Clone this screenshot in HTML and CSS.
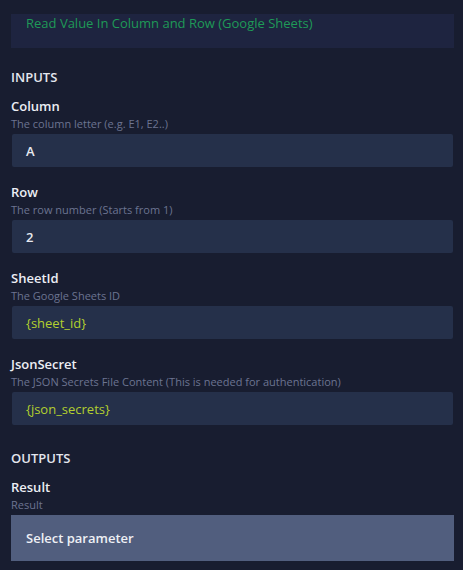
FILE: index.html
```html
<!DOCTYPE html>
<html lang="en">
<head>
<meta charset="utf-8">
<title>Read Value In Column and Row</title>
<link rel="stylesheet" href="styles.css">
</head>
<body>
<div class="panel">
  <div class="title-box">Read Value In Column and Row (Google Sheets)</div>

  <div class="section-title section-inputs">INPUTS</div>

  <div class="field">
    <div class="label">Column</div>
    <div class="desc">The column letter (e.g. E1, E2..)</div>
    <div class="input">A</div>
  </div>

  <div class="field">
    <div class="label">Row</div>
    <div class="desc">The row number (Starts from 1)</div>
    <div class="input">2</div>
  </div>

  <div class="field">
    <div class="label">SheetId</div>
    <div class="desc">The Google Sheets ID</div>
    <div class="input var">{sheet_id}</div>
  </div>

  <div class="field">
    <div class="label">JsonSecret</div>
    <div class="desc">The JSON Secrets File Content (This is needed for authentication)</div>
    <div class="input var">{json_secrets}</div>
  </div>

  <div class="section-title section-outputs">OUTPUTS</div>

  <div class="field">
    <div class="label">Result</div>
    <div class="desc">Result</div>
    <div class="select">Select parameter</div>
  </div>
</div>
</body>
</html>
```

FILE: styles.css
```css
html, body {
  margin: 0;
  padding: 0;
  background: #181d30;
}

body {
  font-family: "Open Sans", "Noto Sans", sans-serif;
  color: #e6e8ef;
}

.panel {
  padding: 14px 9px 0 11px;
  display: flex;
  flex-direction: column;
}

.title-box {
  height: 34px;
  box-sizing: border-box;
  padding: 0 15px;
  background: #1e2440;
  color: #1e9a57;
  font-size: 13px;
  line-height: 18px;
}

.section-title {
  font-size: 13px;
  line-height: 18px;
  font-weight: 600;
  color: #e4e6ee;
}

.section-inputs {
  margin-top: 20px;
  margin-bottom: 10px;
}

.section-outputs {
  margin-top: 9px;
  margin-bottom: 10px;
}

.field {
  display: flex;
  flex-direction: column;
  margin-bottom: 15px;
}

.label {
  font-size: 13px;
  line-height: 20px;
  font-weight: 600;
  color: #eceef4;
}

.desc {
  font-size: 11px;
  line-height: 16px;
  color: #6c7491;
  margin-bottom: 2px;
}

.input {
  height: 33px;
  margin: 0 1px;
  padding: 0 14px;
  box-sizing: border-box;
  display: flex;
  align-items: center;
  background: #25304a;
  border-radius: 2px;
  font-size: 13px;
  font-weight: 600;
  color: #e8eaf0;
}

.input.var {
  color: #b3cf2f;
  font-weight: 400;
}

.select {
  height: 46px;
  padding: 0 15px;
  box-sizing: border-box;
  display: flex;
  align-items: center;
  background: #515e7e;
  font-size: 13px;
  font-weight: 600;
  color: #eef0f5;
}
```
